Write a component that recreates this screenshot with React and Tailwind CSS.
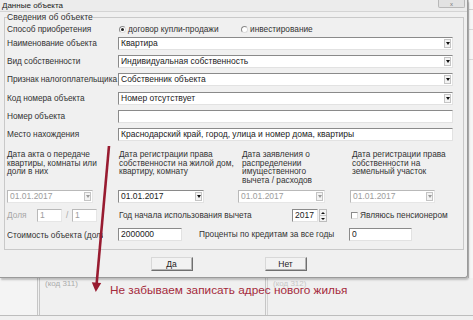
import React from "react";

function Arrow({ disabled = false }) {
  return (
    <div className="ml-auto mr-[1px] flex h-[9px] w-[7px] shrink-0 items-center justify-center border border-[#c4c4c4] bg-[#f3f3f3]">
      <div
        className={
          disabled
            ? "h-0 w-0 border-x-[2px] border-t-[3px] border-x-transparent border-t-[#9a9a9a]"
            : "h-0 w-0 border-x-[2px] border-t-[3px] border-x-transparent border-t-[#111]"
        }
      />
    </div>
  );
}

function Field({ className = "", value = "", disabled = false, arrow = false }) {
  const border = disabled
    ? "border border-t-[#b9b9b9] border-l-[#b9b9b9] border-b-[#e6e6e6] border-r-[#e6e6e6]"
    : "border border-t-[#8a8a8a] border-l-[#8a8a8a] border-b-[#e2e2e2] border-r-[#e2e2e2]";
  return (
    <div className={"flex h-[13px] shrink-0 items-center overflow-hidden bg-white " + border + " " + className}>
      <span
        className={
          disabled
            ? "whitespace-nowrap pl-[2px] text-[8.5px] leading-none text-[#9c9c9c]"
            : "whitespace-nowrap pl-[2px] text-[8.5px] leading-none text-[#222]"
        }
      >
        {value}
      </span>
      {arrow && <Arrow disabled={disabled} />}
    </div>
  );
}

function Radio({ checked = false }) {
  return (
    <span className="flex h-[7px] w-[7px] shrink-0 items-center justify-center rounded-full border border-t-[#8a8a8a] border-l-[#8a8a8a] border-b-[#dcdcdc] border-r-[#dcdcdc] bg-white">
      {checked && <span className="h-[3px] w-[3px] rounded-full bg-[#222]" />}
    </span>
  );
}

function Row({ label, children, className = "" }) {
  return (
    <div className={"flex h-[13px] items-center " + className}>
      <span className="w-[111px] shrink-0 whitespace-nowrap leading-none tracking-[-0.05px]">{label}</span>
      {children}
    </div>
  );
}

function Button({ children }) {
  return (
    <div className="flex h-[14px] w-[42px] items-center justify-center border border-t-[#d8d8d8] border-l-[#d8d8d8] border-b-[#6f6f6f] border-r-[#6f6f6f] bg-[#f2f2f2] text-[8.5px] leading-none text-[#222] shadow-[inset_-1px_-1px_0_#b4b4b4]">
      {children}
    </div>
  );
}

export default function App() {
  return (
    <div className="relative h-[320px] w-[473px] overflow-hidden bg-[#f0f0f0] font-['Liberation_Sans',Arial,sans-serif] text-[8.3px] text-[#333]">
      <div className="flex h-[278px]">
        {/* dialog */}
        <div className="z-10 flex h-[278px] w-[468px] shrink-0 flex-col rounded-br-[3px] border-r border-b border-[#9a9a9a] bg-[#f0f0f0] shadow-[1px_2px_2px_rgba(0,0,0,0.22)]">
          {/* title bar */}
          <div className="flex h-[12px] shrink-0 items-start justify-between border-b border-[#d4d4d4] bg-[#ececec]">
            <span className="whitespace-nowrap pl-[2px] pt-[1px] text-[8px] leading-[9px] text-[#222]">Данные объекта</span>
            <div className="mr-[2px] flex h-[8px] w-[27px] items-center justify-center rounded-b-[2px] border border-t-0 border-[#b8b8b8] bg-[#e2e2e2] text-[6px] leading-none text-[#777]">
              x
            </div>
          </div>

          <fieldset className="ml-[4px] w-[460px] border border-[#c9c9c9] pb-[8px] pl-[2px] pr-[10px]">
            <legend className="whitespace-nowrap text-[8.6px] leading-[10px]">Сведения об объекте</legend>

            <Row label="Способ приобретения" className="mt-[1px]">
              <div className="flex w-[123px] shrink-0 items-center gap-[2px] pl-[1px]">
                <Radio checked />
                <span className="whitespace-nowrap leading-none">договор купли-продажи</span>
              </div>
              <div className="flex items-center gap-[2px]">
                <Radio />
                <span className="whitespace-nowrap leading-none">инвестирование</span>
              </div>
            </Row>

            <Row label="Наименование объекта" className="mt-[1px]">
              <Field className="w-[335px]" value="Квартира" arrow />
            </Row>
            <Row label="Вид собственности" className="mt-[5px]">
              <Field className="w-[335px]" value="Индивидуальная собственность" arrow />
            </Row>
            <Row label="Признак налогоплательщика" className="mt-[5px]">
              <Field className="w-[335px]" value="Собственник объекта" arrow />
            </Row>
            <Row label="Код номера объекта" className="mt-[6px]">
              <Field className="w-[335px]" value="Номер отсутствует" arrow />
            </Row>
            <Row label="Номер объекта" className="mt-[5px]">
              <Field className="w-[335px]" value="" />
            </Row>
            <Row label="Место нахождения" className="mt-[5px]">
              <Field className="w-[335px]" value="Краснодарский край, город, улица и номер дома, квартиры" />
            </Row>

            {/* date labels */}
            <div className="mt-[9px] flex h-[40px] whitespace-nowrap leading-[8.7px]">
              <div className="w-[111px] shrink-0">
                Дата акта о передаче
                <br />
                квартиры, комнаты или
                <br />
                доли в них
              </div>
              <div className="w-[120px] shrink-0 pl-[1px]">
                Дата регистрации права
                <br />
                собственности на жилой дом,
                <br />
                квартиру, комнату
              </div>
              <div className="w-[112px] shrink-0 pl-[4px]">
                Дата заявления о
                <br />
                распределении
                <br />
                имущественного
                <br />
                вычета / расходов
              </div>
              <div className="pl-[2px]">
                Дата регистрации права
                <br />
                собственности на
                <br />
                земельный участок
              </div>
            </div>

            {/* date fields */}
            <div className="flex h-[13px]">
              <div className="w-[111px] shrink-0">
                <Field className="w-[86px]" value="01.01.2017" disabled arrow />
              </div>
              <div className="w-[120px] shrink-0">
                <Field className="w-[86px]" value="01.01.2017" arrow />
              </div>
              <div className="w-[112px] shrink-0">
                <Field className="w-[87px]" value="01.01.2017" disabled arrow />
              </div>
              <div>
                <Field className="w-[85px]" value="01.01.2017" disabled arrow />
              </div>
            </div>

            {/* share / year row */}
            <div className="mt-[6px] flex h-[13px] items-center">
              <div className="flex w-[111px] shrink-0 items-center">
                <span className="w-[30px] shrink-0 leading-none text-[#a6a6a6]">Доля</span>
                <Field className="w-[25px]" value="1" disabled />
                <span className="w-[10px] shrink-0 pl-[4px] leading-none text-[#a6a6a6]">/</span>
                <Field className="w-[25px]" value="1" disabled />
              </div>
              <div className="flex w-[232px] shrink-0 items-center">
                <span className="w-[174px] shrink-0 whitespace-nowrap pl-[1px] leading-none">Год начала использования вычета</span>
                <div className="flex items-center">
                  <Field className="w-[26px]" value="2017" />
                  <div className="ml-[1px] flex h-[13px] w-[8px] flex-col border border-[#bdbdbd] bg-[#f3f3f3]">
                    <div className="flex flex-1 items-center justify-center border-b border-[#c8c8c8]">
                      <div className="h-0 w-0 border-x-[2px] border-b-[2px] border-x-transparent border-b-[#111]" />
                    </div>
                    <div className="flex flex-1 items-center justify-center">
                      <div className="h-0 w-0 border-x-[2px] border-t-[2px] border-x-transparent border-t-[#111]" />
                    </div>
                  </div>
                </div>
              </div>
              <div className="flex items-center gap-[2px] pl-[1px]">
                <span className="h-[7px] w-[7px] shrink-0 border border-t-[#8a8a8a] border-l-[#8a8a8a] border-b-[#dcdcdc] border-r-[#dcdcdc] bg-white" />
                <span className="whitespace-nowrap leading-none">Являюсь пенсионером</span>
              </div>
            </div>

            {/* cost row */}
            <div className="mt-[6px] flex h-[13px] items-center">
              <div className="w-[111px] shrink-0">
                <div className="w-[96px] overflow-hidden whitespace-nowrap leading-[10px]">Стоимость объекта (доли)</div>
              </div>
              <Field className="w-[64px]" value="2000000" />
              <span className="w-[167px] shrink-0 whitespace-nowrap pl-[17px] leading-none">Проценты по кредитам за все годы</span>
              <Field className="w-[63px]" value="0" />
            </div>
          </fieldset>

          <div className="mt-[7px] flex justify-center gap-[72px] pr-[10px]">
            <Button>Да</Button>
            <Button>Нет</Button>
          </div>
        </div>

        {/* parent window strip on the right */}
        <div className="flex flex-1 flex-col border-l border-[#c9c9c9] bg-[#f6f6f6]">
          <div className="h-[10px] border-b border-[#d0d0d0]" />
          <div className="h-[20px] border-b border-[#d8d8d8]" />
          <div className="h-[30px] border-b border-[#d8d8d8]" />
        </div>
      </div>

      {/* parent window bottom */}
      <div className="flex h-[38px] border-b border-[#bdbdbd]">
        <div className="w-[38px] shrink-0 border-r border-[#c6c6c6] bg-[#f4f4f4]" />
        <div className="ml-[1px] w-[227px] shrink-0 whitespace-nowrap border-l border-r border-[#c6c6c6] pl-[5px] pt-[1px] text-[8px] leading-[9px] text-[#ababab]">
          (код 311)
        </div>
        <div className="ml-[1px] flex-1 whitespace-nowrap border-l border-[#d4d4d4] pl-[5px] pt-[1px] text-[8px] leading-[9px] text-[#c6c6c6]">
          (код 312)
        </div>
      </div>

      {/* annotation overlays */}
      <div className="pointer-events-none absolute left-[108px] top-[123px] h-[22px] w-[248px] border-2 border-[#92293b]" />
      <svg className="pointer-events-none absolute left-0 top-0 z-20" width="473" height="320" viewBox="0 0 473 320">
        <line x1="109" y1="146" x2="96.6" y2="284" stroke="#981b30" strokeWidth="2.6" />
        <polygon points="101.2,283 91.8,282.2 95.8,292" fill="#981b30" />
      </svg>
      <div className="pointer-events-none absolute left-[110px] top-[283px] z-20 whitespace-nowrap text-[11.8px] leading-[14px] text-[#a52a3c]">
        Не забываем записать адрес нового жилья
      </div>
    </div>
  );
}
